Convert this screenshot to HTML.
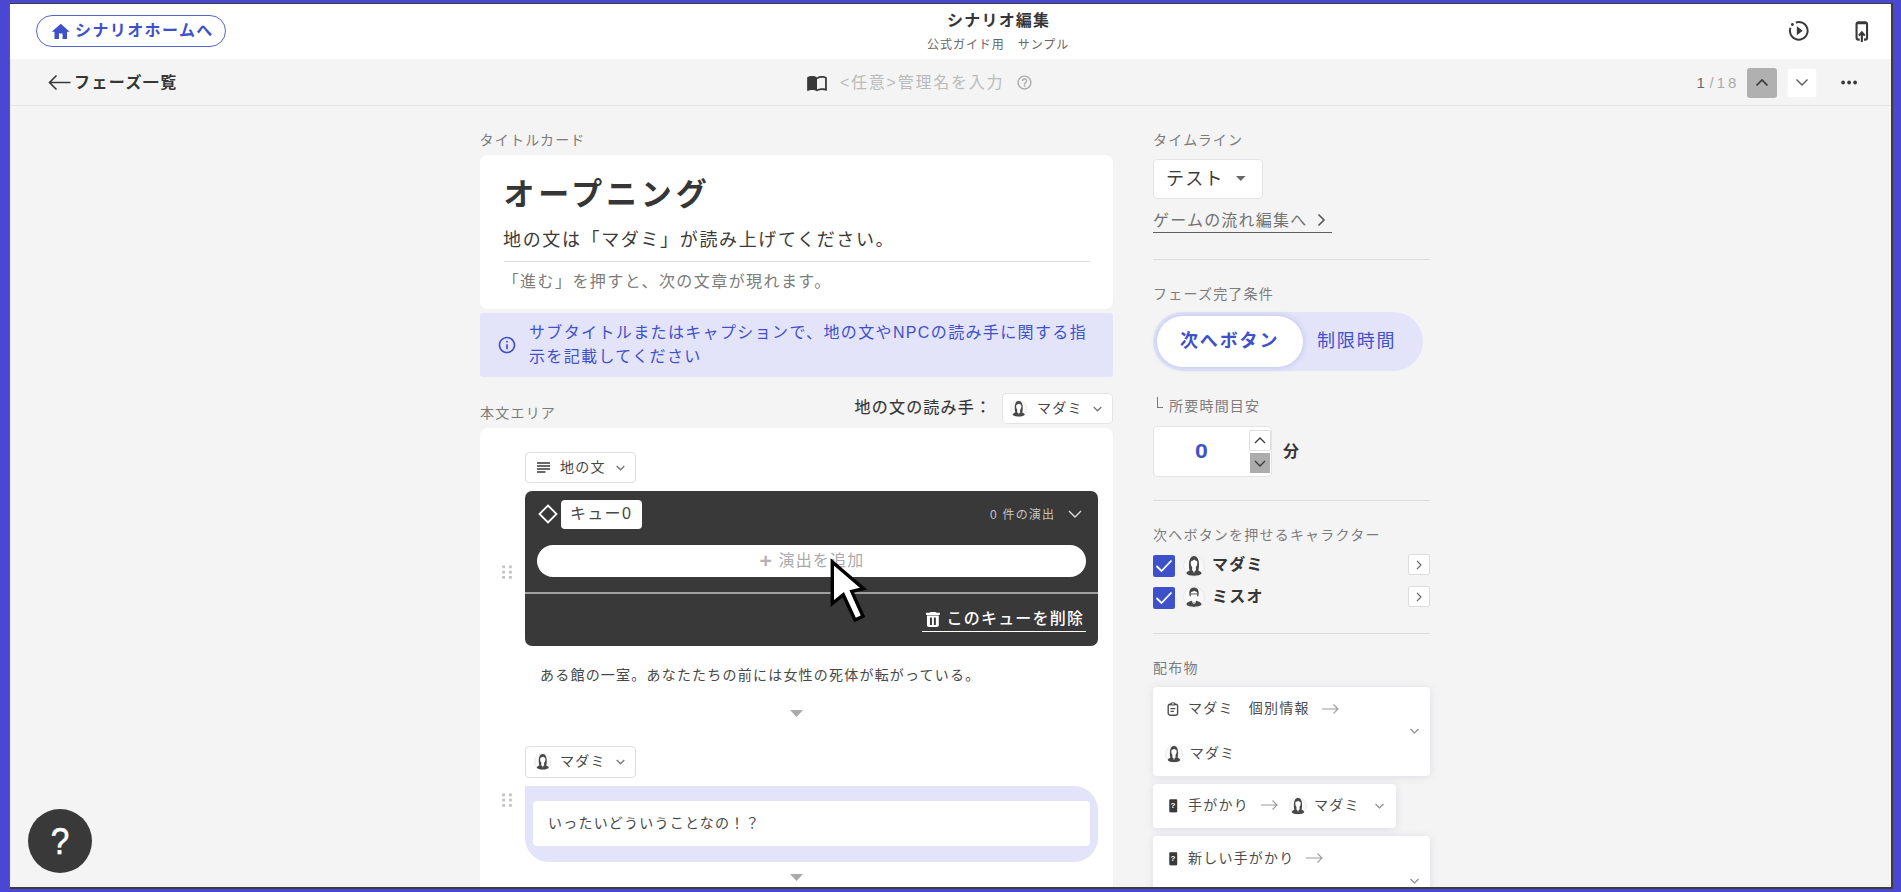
<!DOCTYPE html>
<html lang="ja">
<head>
<meta charset="utf-8">
<title>シナリオ編集</title>
<style>
*{box-sizing:border-box;margin:0;padding:0}
html,body{width:1901px;height:892px;overflow:hidden;background:#4a47d2}
body{position:relative;font-family:"Liberation Sans","Noto Sans CJK JP",sans-serif;color:#474747;letter-spacing:.0865em;font-size:14px}
.a{position:absolute}
.t{position:absolute;white-space:nowrap;line-height:20px;height:20px}
.lbl{font-size:14px;color:#7c7c7c}
.ct{color:#4c4c4c}
.b{font-weight:700;color:#363636}
.m{font-weight:500}
.blue{color:#3f51c9}
.hr{position:absolute;height:1px;background:#dcdcdc}
svg{position:absolute;overflow:visible}
.box{position:absolute;background:#fff;border:1px solid #e4e4e4;border-radius:4px}
.shadow{box-shadow:0 1px 8px rgba(80,80,150,.13)}
</style>
</head>
<body>
<svg width="0" height="0" style="left:0;top:0">
<defs>
<symbol id="avF" viewBox="0 0 22 22">
<circle cx="11" cy="11" r="10.400" fill="#f8f8f8" stroke="#e3e3e3" stroke-width=".800"/>
<path fill="#474747" d="M3.400 18.600C3.700 16.200 6.200 15.700 8.600 15l2.400 1.500L13.400 15c2.400.700 4.900 1.200 5.200 3.600C16.400 21.600 5.600 21.600 3.400 18.600z"/>
<path fill="#474747" d="M6.700 16.200C5.500 11 5.200 1.100 11 1.100s5.500 9.900 4.300 15.100L12.700 15.200V11.500H9.300V15.200z"/>
<path fill="#fff" d="M8.300 5.900C9.600 5.700 10.600 5.200 11.300 4.500c.500.800 1.400 1.300 2.500 1.500.400.700.500 1.400.500 2.200 0 2-.800 3.300-1.700 3.900v2.700L11 18.500 9.400 14.800v-2.700C8.500 11.500 7.700 10.200 7.700 8.200c0-.900.200-1.700.600-2.300z"/>
<path fill="#474747" d="M9.500 15.300L11 16.700l1.500-1.400L11 19.600z" opacity=".45"/>
</symbol>
<symbol id="avM" viewBox="0 0 22 22">
<circle cx="11" cy="11" r="10.400" fill="#f8f8f8" stroke="#e3e3e3" stroke-width=".800"/>
<path fill="#474747" d="M3.400 18.600C3.700 16.100 6.300 15.600 8.900 14.800h4.200c2.600.800 5.200 1.300 5.500 3.800C16.400 21.600 5.600 21.600 3.400 18.600z"/>
<path fill="#474747" d="M6.700 10.200C5.600 5.500 6.800 1.500 11 1.500s5.400 4 4.300 8.700z"/>
<path fill="#fff" d="M8.100 5.900c1.200-.100 2.400-.500 3.200-1.100.700.600 1.600 1 2.600 1.100.300.700.400 1.500.400 2.300 0 2.300-.900 3.900-1.700 4.700v2L11 17.300 9.400 14.900v-2C8.600 12.100 7.700 10.500 7.700 8.200c0-.800.100-1.600.400-2.300z"/>
<path fill="#474747" d="M7.500 7.400h7v1.100h-7z" opacity=".85"/>
<path fill="#fff" d="M9.400 14.900L11 17.300l1.600-2.400.6.400-1.400 2.600h-1.600l-1.400-2.600z"/>
<path fill="#474747" d="M10.500 16.600h1l.5 4.400h-2z" opacity=".6"/>
</symbol>
<symbol id="grip" viewBox="0 0 10 14">
<path fill="#c2c2c2" d="M.2.400h2.800v2.800H.2zM7 .4h2.800v2.800H7zM.2 5.700h2.800v2.800H.2zM7 5.700h2.800v2.800H7zM.2 11h2.800v2.800H.2zM7 11h2.800v2.800H7z"/>
</symbol>
<symbol id="clue" viewBox="0 0 10 14">
<rect x=".3" y=".3" width="9.400" height="13.400" rx="1.300" fill="#393939"/>
</symbol>
</defs>
</svg>
<!-- window frame -->
<div class="a" style="left:10px;top:3px;width:1883px;height:886px;background:#3d3d38"></div>
<div class="a" style="left:10px;top:4px;width:1881px;height:883px;background:#f4f4f4"></div>

<!-- HEADER -->
<div class="a" style="left:10px;top:4px;width:1881px;height:55px;background:#fff"></div>
<div class="a" style="left:10px;top:105px;width:1881px;height:1px;background:#e6e6e6"></div>

<div class="a" style="left:36px;top:15px;width:190px;height:32px;border:1px solid #5565cf;border-radius:16px;background:#fff"></div>
<svg style="left:50px;top:20.800px" width="21.500" height="21.500" viewBox="0 0 24 24"><path fill="#3f51c9" d="M10 20v-6h4v6h5v-8h3L12 3 2 12h3v8z"/></svg>
<div class="t b blue" style="left:75px;top:20.700px;font-size:16px;letter-spacing:1.400px">シナリオホームへ</div>

<div class="t b" style="left:947px;top:11.300px;font-size:16px">シナリオ編集</div>
<div class="t" style="left:927px;top:35px;font-size:12px;color:#666;letter-spacing:.08em">公式ガイド用　サンプル</div>

<!-- play icon -->
<svg style="left:1786.650px;top:19.400px" width="23.600" height="23.600" viewBox="0 0 24 24"><path fill="#393939" d="M10 16.5l6-4.500-6-4.500zM22 12c0-5.540-4.460-10-10-10-1.170 0-2.300.190-3.380.560l.700 1.940c.850-.340 1.740-.530 2.680-.530 4.410 0 8.030 3.620 8.030 8.030 0 4.410-3.620 8.030-8.030 8.030-4.410 0-8.030-3.620-8.030-8.030 0-.940.190-1.880.530-2.720l-1.940-.660C2.190 9.700 2 10.830 2 12c0 5.540 4.460 10 10 10s10-4.460 10-10zM5.500 4C4.660 4 4 4.660 4 5.500S4.660 7 5.500 7 7 6.340 7 5.500 6.340 4 5.500 4z"/></svg>
<!-- phone icon -->
<svg style="left:1853px;top:19px" width="18" height="26" viewBox="0 0 18 26"><path fill="#393939" fill-rule="evenodd" d="M5.300 2.200h7c1.600 0 2.800 1.200 2.800 2.800v13.900c0 1.600-1.200 2.800-2.800 2.800h-7c-1.600 0-2.800-1.200-2.800-2.800V5c0-1.600 1.200-2.800 2.800-2.800zM4.600 5.300v13.500c0 .400.300.700.700.700h7c.400 0 .700-.300.700-.700V5.300z"/><rect x="6.700" y="18.500" width="4.300" height="4" fill="#fff"/><path d="M8.850 23V13.500M5.900 16.600l2.950-3.300 2.950 3.300" fill="none" stroke="#393939" stroke-width="2.100"/></svg>

<!-- sub header -->
<svg style="left:47.500px;top:74px" width="23" height="17" viewBox="0 0 23 17"><path d="M22.500 8.500H1.500M8.500 1.500L1.500 8.500l7 7" fill="none" stroke="#393939" stroke-width="1.600"/></svg>
<div class="t b" style="left:74px;top:73px;font-size:16px;letter-spacing:1.400px">フェーズ一覧</div>

<svg style="left:804.500px;top:72px" width="24" height="21.500" viewBox="0 0 24 24"><path fill="#393939" d="M21 5c-1.110-.350-2.330-.500-3.500-.500-1.950 0-4.050.400-5.500 1.500-1.450-1.100-3.550-1.500-5.500-1.500S2.450 4.900 1 6v14.650c0 .250.250.500.500.500.100 0 .150-.050.250-.050C3.100 20.450 5.050 20 6.500 20c1.950 0 4.050.400 5.500 1.500 1.350-.850 3.800-1.500 5.500-1.500 1.650 0 3.350.300 4.750 1.050.100.050.150.050.250.050.250 0 .500-.250.500-.500V6c-.600-.450-1.250-.750-2-1zm0 13.500c-1.100-.350-2.300-.500-3.500-.500-1.700 0-4.150.650-5.500 1.500V8c1.350-.850 3.800-1.500 5.500-1.500 1.200 0 2.400.150 3.500.500v11.500z"/></svg>
<div class="t" style="left:840px;top:72.500px;font-size:16px;color:#bbb;letter-spacing:1.750px">&lt;任意&gt;管理名を入力</div>
<svg style="left:1016px;top:74px" width="17" height="17" viewBox="0 0 24 24"><path fill="#aaa" d="M11 18h2v-2h-2v2zm1-16C6.480 2 2 6.480 2 12s4.480 10 10 10 10-4.480 10-10S17.520 2 12 2zm0 18c-4.410 0-8-3.590-8-8s3.590-8 8-8 8 3.590 8 8-3.590 8-8 8zm0-14c-2.210 0-4 1.790-4 4h2c0-1.100.900-2 2-2s2 .900 2 2c0 2-3 1.750-3 5h2c0-2.250 3-2.500 3-5 0-2.210-1.790-4-4-4z"/></svg>

<div class="t" style="left:1696.500px;top:72.500px;font-size:15px;color:#6a6a6a;letter-spacing:0">1</div>
<div class="t" style="left:1709.500px;top:72.500px;font-size:15px;color:#aaa;letter-spacing:3px">/18</div>
<div class="a" style="left:1747px;top:68px;width:29.500px;height:29.500px;background:#b0b0b0;border-radius:3px"></div>
<svg style="left:1755px;top:77.800px" width="14" height="9" viewBox="0 0 14 9"><path d="M1.500 7.500L7 2l5.500 5.500" fill="none" stroke="#393939" stroke-width="1.700"/></svg>
<div class="a" style="left:1786.500px;top:68px;width:30px;height:29.500px;background:#fff;border:1px solid #f6f6f6;border-radius:3px"></div>
<svg style="left:1794.500px;top:78.300px" width="14" height="9" viewBox="0 0 14 9"><path d="M1.500 1.500L7 7l5.500-5.500" fill="none" stroke="#5a5a5a" stroke-width="1.400"/></svg>
<svg style="left:1840px;top:80.200px" width="18" height="5" viewBox="0 0 18 5"><circle cx="3.100" cy="2.500" r="1.900" fill="#393939"/><circle cx="9.100" cy="2.500" r="1.900" fill="#393939"/><circle cx="15.100" cy="2.500" r="1.900" fill="#393939"/></svg>


<!-- MAIN COLUMN -->
<div class="t lbl" style="left:479.500px;top:129.500px">タイトルカード</div>
<div class="a" style="left:480px;top:155px;width:633px;height:154px;background:#fff;border-radius:8px"></div>
<div class="t b" style="left:503.500px;top:173px;font-size:31px;line-height:44px;height:44px;letter-spacing:3.800px">オープニング</div>
<div class="t" style="left:503px;top:226.700px;font-size:18px;line-height:26px;height:26px;letter-spacing:1.640px;color:#3a3a3a">地の文は「マダミ」が読み上げてください。</div>
<div class="hr" style="left:504px;top:261px;width:586px"></div>
<div class="t" style="left:502.700px;top:272px;font-size:16px;color:#7c7c7c;letter-spacing:1.430px">「進む」を押すと、次の文章が現れます。</div>

<div class="a" style="left:480px;top:313px;width:633px;height:64px;background:#e3e4fa;border-radius:3px"></div>
<svg style="left:496.500px;top:335px" width="20" height="20" viewBox="0 0 24 24"><path fill="#3f51c9" d="M11 7h2v2h-2zm0 4h2v6h-2zm1-9C6.480 2 2 6.480 2 12s4.480 10 10 10 10-4.480 10-10S17.520 2 12 2zm0 18c-4.410 0-8-3.590-8-8s3.590-8 8-8 8 3.590 8 8-3.590 8-8 8z"/></svg>
<div class="t blue" style="left:529px;top:321px;font-size:16px;line-height:24px;height:48px;width:580px;white-space:normal;letter-spacing:1.360px">サブタイトルまたはキャプションで、地の文やNPCの読み手に関する指<br>示を記載してください</div>

<div class="t lbl" style="left:480px;top:403px">本文エリア</div>
<div class="t" style="left:854.500px;top:398px;font-size:16px;color:#333;-webkit-text-stroke:.150px #333">地の文の読み手：</div>
<div class="box" style="left:1002px;top:393px;width:111px;height:31px"></div>
<svg style="left:1010.200px;top:399.600px" width="17.500" height="17.500" viewBox="0 0 22 22"><use href="#avF"/></svg>
<div class="t" style="left:1037px;top:398px;font-size:14px">マダミ</div>
<svg style="left:1093px;top:406px" width="9" height="6" viewBox="0 0 9 6"><path d="M.700 1l3.800 3.700L8.300 1" fill="none" stroke="#777" stroke-width="1.400"/></svg>

<div class="a" style="left:480px;top:428px;width:633px;height:470px;background:#fff;border-radius:8px"></div>

<!-- block 1 -->
<div class="box" style="left:525px;top:452.300px;width:111px;height:31px;border-color:#ddd"></div>
<svg style="left:537px;top:462px" width="13" height="11" viewBox="0 0 13 11"><path d="M0 1h13M0 4h13M0 7h13M0 10h8.500" stroke="#393939" stroke-width="1.500" fill="none"/></svg>
<div class="t" style="left:560px;top:457px;font-size:14px">地の文</div>
<svg style="left:616px;top:465px" width="9" height="6" viewBox="0 0 9 6"><path d="M.700 1l3.800 3.700L8.300 1" fill="none" stroke="#777" stroke-width="1.400"/></svg>

<div class="a" style="left:525px;top:491.300px;width:573px;height:154.500px;background:#393939;border-radius:7px"></div>
<svg style="left:538px;top:504px" width="20" height="20" viewBox="0 0 20 20"><path d="M10 1.500L18.500 10 10 18.500 1.500 10z" fill="none" stroke="#fff" stroke-width="1.800"/></svg>
<div class="a" style="left:561px;top:500px;width:81px;height:29px;background:#fff;border-radius:4px"></div>
<div class="t" style="left:570px;top:502px;font-size:16px;line-height:24px;height:24px;letter-spacing:1.300px">キュー0</div>
<div class="t" style="left:990px;top:504.700px;font-size:12px;color:#c4c4c4">0 件の演出</div>
<svg style="left:1068px;top:510px" width="14" height="9" viewBox="0 0 14 9"><path d="M1 1l6 6 6-6" fill="none" stroke="#ddd" stroke-width="1.400"/></svg>
<div class="a" style="left:537px;top:545px;width:549px;height:32px;background:#fff;border-radius:16px"></div>
<div class="t" style="left:759.500px;top:549.400px;font-size:16px;color:#aaa"><span class="b" style="font-size:21px;letter-spacing:0;margin-right:1px;position:relative;top:2px;color:#b2b2b2">+</span> 演出を追加</div>
<div class="a" style="left:525px;top:592.300px;width:573px;height:1.500px;background:#a0a0a0"></div>
<svg style="left:926.300px;top:612px" width="13.800" height="15" viewBox="0 0 14 18" preserveAspectRatio="none"><path fill="#fff" fill-rule="evenodd" d="M1 16c0 1.100.900 2 2 2h8c1.100 0 2-.900 2-2V4.300H1zM4 6.500h2v9H4zM8 6.500h2v9H8zM10.500 1l-1-1h-5l-1 1H0v2.700h14V1z"/></svg>
<div class="t m" style="left:946.500px;top:609.300px;font-size:16px;color:#fff">このキューを削除</div>
<div class="a" style="left:922px;top:631px;width:164px;height:1px;background:#fff"></div>
<svg class="dots" style="left:502px;top:565px" width="10" height="14" viewBox="0 0 10 14"><use href="#grip"/></svg>

<div class="t" style="left:540px;top:665.300px;font-size:14px">ある館の一室。あなたたちの前には女性の死体が転がっている。</div>
<svg style="left:790px;top:710px" width="13" height="7" viewBox="0 0 13 7"><path d="M0 0h13L6.500 7z" fill="#aaa"/></svg>

<!-- block 2 -->
<div class="box" style="left:525px;top:746px;width:111px;height:31.500px;border-color:#ddd"></div>
<svg style="left:534px;top:752.800px" width="17.500" height="17.500" viewBox="0 0 22 22"><use href="#avF"/></svg>
<div class="t" style="left:560px;top:751px;font-size:14px">マダミ</div>
<svg style="left:616px;top:759px" width="9" height="6" viewBox="0 0 9 6"><path d="M.700 1l3.800 3.700L8.300 1" fill="none" stroke="#777" stroke-width="1.400"/></svg>
<div class="a" style="left:525px;top:785.700px;width:573px;height:76.300px;background:#e3e4fa;border-radius:0 24px 24px 24px"></div>
<div class="a" style="left:533px;top:801px;width:557px;height:45px;background:#fff;border-radius:4px"></div>
<div class="t" style="left:548px;top:813px;font-size:14px">いったいどういうことなの！？</div>
<svg style="left:502px;top:793px" width="10" height="14" viewBox="0 0 10 14"><use href="#grip"/></svg>
<svg style="left:790px;top:874px" width="13" height="7" viewBox="0 0 13 7"><path d="M0 0h13L6.500 7z" fill="#aaa"/></svg>


<!-- RIGHT COLUMN -->
<div class="t lbl" style="left:1153px;top:130px">タイムライン</div>
<div class="box" style="left:1153px;top:159px;width:110px;height:39.700px"></div>
<div class="t" style="left:1166px;top:167.200px;font-size:18px;line-height:24px;height:24px;color:#3a3a3a">テスト</div>
<svg style="left:1236.300px;top:175.800px" width="9.600" height="5" viewBox="0 0 10 5"><path d="M0 0h10L5 5z" fill="#666"/></svg>
<div class="t" style="left:1153px;top:210.500px;font-size:16px;color:#727272">ゲームの流れ編集へ</div>
<svg style="left:1317px;top:213px" width="9" height="14" viewBox="0 0 9 14"><path d="M1.500 1.500L7 7l-5.500 5.500" fill="none" stroke="#555" stroke-width="1.600"/></svg>
<div class="a" style="left:1153px;top:232px;width:179px;height:1px;background:#606060"></div>
<div class="hr" style="left:1153px;top:259px;width:277px"></div>

<div class="t lbl" style="left:1153px;top:284px">フェーズ完了条件</div>
<div class="a" style="left:1153px;top:312px;width:270px;height:58.500px;background:#e3e4fa;border-radius:29.500px"></div>
<div class="a" style="left:1157px;top:316px;width:146px;height:51px;background:#fff;border-radius:26px;box-shadow:0 0 6px rgba(63,81,201,.25)"></div>
<div class="t b blue" style="left:1180px;top:329px;font-size:18px;line-height:24px;height:24px;letter-spacing:1.850px">次へボタン</div>
<div class="t blue" style="left:1317px;top:329px;font-size:18px;line-height:24px;height:24px;letter-spacing:1.850px">制限時間</div>

<div class="a" style="left:1156.500px;top:397.300px;width:6.300px;height:10.300px;border-left:1.200px solid #777;border-bottom:1.200px solid #777"></div>
<div class="t lbl" style="left:1169px;top:396px">所要時間目安</div>
<div class="box" style="left:1153px;top:426px;width:119px;height:51px"></div>
<div class="t b blue" style="left:1195.500px;top:439px;font-size:19.500px;line-height:24px;height:24px;letter-spacing:0;transform:scaleX(1.180)">0</div>
<div class="a" style="left:1249px;top:430px;width:22px;height:21px;background:#fff;border:1px solid #ddd;border-radius:2px"></div>
<svg style="left:1254px;top:437px" width="12" height="7" viewBox="0 0 12 7"><path d="M1 6l5-5 5 5" fill="none" stroke="#393939" stroke-width="1.300"/></svg>
<div class="a" style="left:1250px;top:453px;width:20px;height:19.500px;background:#acacac"></div>
<svg style="left:1254px;top:460px" width="12" height="7" viewBox="0 0 12 7"><path d="M1 1l5 5 5-5" fill="none" stroke="#393939" stroke-width="1.300"/></svg>
<div class="t b" style="left:1283px;top:441.700px;font-size:16px">分</div>
<div class="hr" style="left:1153px;top:500px;width:277px"></div>

<div class="t lbl" style="left:1153px;top:525px">次へボタンを押せるキャラクター</div>
<div class="a" style="left:1153px;top:555px;width:22px;height:22px;background:#3f51c9;border-radius:2px"></div>
<svg style="left:1153px;top:555px" width="22" height="22" viewBox="0 0 22 22"><path d="M3.500 11l5 5L18.500 5.500" fill="none" stroke="#fff" stroke-width="1.800"/></svg>
<svg style="left:1183px;top:555px" width="22" height="22" viewBox="0 0 22 22"><use href="#avF"/></svg>
<div class="t b" style="left:1212px;top:555px;font-size:16px">マダミ</div>
<div class="a" style="left:1408px;top:554px;width:22px;height:21px;background:#fff;border:1px solid #ddd;border-radius:2px"></div>
<svg style="left:1416px;top:560px" width="6" height="10" viewBox="0 0 6 10"><path d="M1 1l4 4-4 4" fill="none" stroke="#666" stroke-width="1.100"/></svg>

<div class="a" style="left:1153px;top:586.500px;width:22px;height:22px;background:#3f51c9;border-radius:2px"></div>
<svg style="left:1153px;top:586.500px" width="22" height="22" viewBox="0 0 22 22"><path d="M3.500 11l5 5L18.500 5.500" fill="none" stroke="#fff" stroke-width="1.800"/></svg>
<svg style="left:1183px;top:586px" width="22" height="22" viewBox="0 0 22 22"><use href="#avM"/></svg>
<div class="t b" style="left:1212px;top:587px;font-size:16px">ミスオ</div>
<div class="a" style="left:1408px;top:586px;width:22px;height:21px;background:#fff;border:1px solid #ddd;border-radius:2px"></div>
<svg style="left:1416px;top:592px" width="6" height="10" viewBox="0 0 6 10"><path d="M1 1l4 4-4 4" fill="none" stroke="#666" stroke-width="1.100"/></svg>
<div class="hr" style="left:1153px;top:633px;width:277px"></div>

<div class="t lbl" style="left:1153px;top:658px">配布物</div>
<div class="a shadow" style="left:1153px;top:687px;width:277px;height:89px;background:#fff;border-radius:4px"></div>
<svg style="left:1166.900px;top:702px" width="12" height="15" viewBox="0 0 12 15"><rect x="1.200" y="2.300" width="9.400" height="10.900" rx="2" fill="none" stroke="#4f4f4f" stroke-width="1.400"/><path d="M3.300 3.600V2.200C3.300 1.100 4.300.300 5.900.300s2.600.800 2.600 1.900v1.400z" fill="#4f4f4f"/><circle cx="5.900" cy="1.900" r=".800" fill="#fff"/><path d="M3.500 6.700h4.800M3.500 9.300h3.400" stroke="#4f4f4f" stroke-width="1.200"/></svg>
<div class="t ct" style="left:1188px;top:698px;font-size:14px">マダミ　個別情報</div>
<svg style="left:1322px;top:704px" width="17" height="10" viewBox="0 0 17 10"><path d="M0 5h16M11.500 .500L16 5l-4.500 4.500" fill="none" stroke="#9c9c9c" stroke-width="1.100"/></svg>
<svg style="left:1410px;top:728px" width="9" height="6" viewBox="0 0 9 6"><path d="M.500 1l4 4 4-4" fill="none" stroke="#8a8a8a" stroke-width="1.150"/></svg>
<svg style="left:1165px;top:745px" width="18" height="18" viewBox="0 0 22 22"><use href="#avF"/></svg>
<div class="t ct" style="left:1189.700px;top:743px;font-size:14px">マダミ</div>

<div class="a shadow" style="left:1153px;top:784px;width:243px;height:44px;background:#fff;border-radius:4px"></div>
<svg style="left:1168.700px;top:799.300px" width="8.600" height="13.700" viewBox="0 0 10 14" preserveAspectRatio="none"><use href="#clue"/></svg>
<div class="t b" style="left:1168px;top:796.200px;width:10px;text-align:center;font-size:8px;color:#fff;letter-spacing:0">?</div>
<div class="t ct" style="left:1188px;top:795px;font-size:14px">手がかり</div>
<svg style="left:1261px;top:800px" width="17" height="10" viewBox="0 0 17 10"><path d="M0 5h16M11.500 .500L16 5l-4.500 4.500" fill="none" stroke="#9c9c9c" stroke-width="1.100"/></svg>
<svg style="left:1288.500px;top:797.300px" width="18" height="18" viewBox="0 0 22 22"><use href="#avF"/></svg>
<div class="t ct" style="left:1314px;top:795px;font-size:14px">マダミ</div>
<svg style="left:1375px;top:803px" width="9" height="6" viewBox="0 0 9 6"><path d="M.500 1l4 4 4-4" fill="none" stroke="#8a8a8a" stroke-width="1.150"/></svg>

<div class="a shadow" style="left:1153px;top:836px;width:277px;height:60px;background:#fff;border-radius:4px"></div>
<svg style="left:1168.700px;top:852.300px" width="8.600" height="13.700" viewBox="0 0 10 14" preserveAspectRatio="none"><use href="#clue"/></svg>
<div class="t b" style="left:1168px;top:849.200px;width:10px;text-align:center;font-size:8px;color:#fff;letter-spacing:0">?</div>
<div class="t ct" style="left:1188px;top:848px;font-size:14px">新しい手がかり</div>
<svg style="left:1306px;top:853px" width="17" height="10" viewBox="0 0 17 10"><path d="M0 5h16M11.500 .500L16 5l-4.500 4.500" fill="none" stroke="#9c9c9c" stroke-width="1.100"/></svg>
<svg style="left:1410px;top:878px" width="9" height="6" viewBox="0 0 9 6"><path d="M.500 1l4 4 4-4" fill="none" stroke="#8a8a8a" stroke-width="1.150"/></svg>


<!-- help fab -->
<div class="a" style="left:28px;top:809px;width:64px;height:64px;border-radius:32px;background:#393939"></div>
<div class="t" style="left:28px;top:819.500px;width:64px;text-align:center;font-size:37px;line-height:44px;height:44px;color:#fff;letter-spacing:0;transform:scaleX(.9);-webkit-text-stroke:.600px #fff">?</div>
<!-- cursor -->
<svg style="left:815px;top:545px" width="70" height="90" viewBox="0 0 70 90"><path d="M17.300 17V58.500L28.300 49.700 40 75l8-3.800L36.800 46.400l11.700-2.800z" fill="#fff" stroke="#000" stroke-width="3.400" stroke-linejoin="miter" stroke-miterlimit="10"/></svg>
<!-- frame borders on top -->
<div class="a" style="left:0;top:0;width:1901px;height:3px;background:#4a47d2"></div>
<div class="a" style="left:10px;top:3px;width:1883px;height:1px;background:#3d3d38"></div>
<div class="a" style="left:0;top:0;width:10px;height:892px;background:#4a47d2"></div>
<div class="a" style="left:9px;top:4px;width:1px;height:884px;background:#5653b6"></div>
<div class="a" style="left:10px;top:59px;width:1px;height:828px;background:#ecece9"></div>
<div class="a" style="left:1891px;top:3px;width:2px;height:886px;background:#3d3d38"></div>
<div class="a" style="left:10px;top:887px;width:1883px;height:2px;background:#3d3d38"></div>
<div class="a" style="left:1893px;top:0;width:8px;height:892px;background:#4a47d2"></div>
<div class="a" style="left:0;top:889px;width:1901px;height:3px;background:#4a47d2"></div>

</body>
</html>
